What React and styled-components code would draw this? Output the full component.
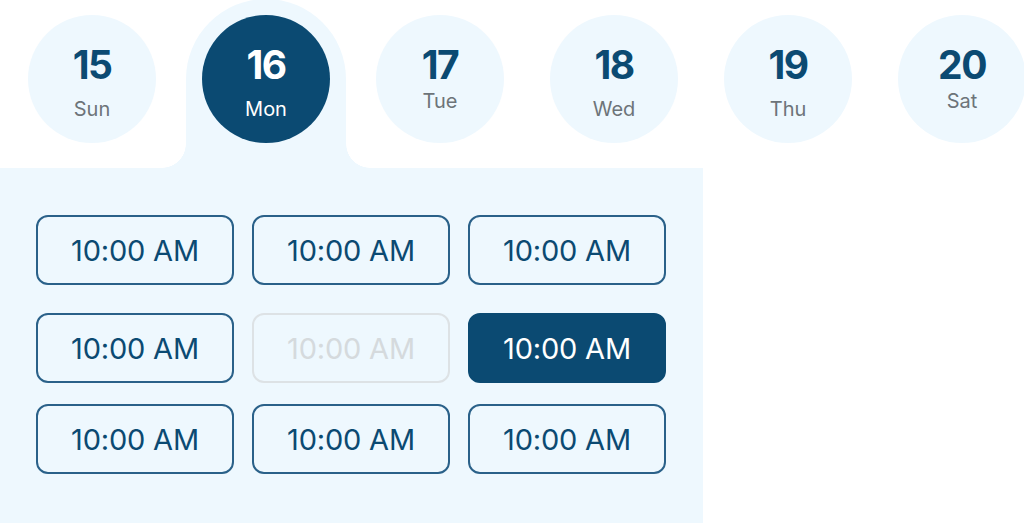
import styled, { createGlobalStyle, css } from "styled-components";

const GlobalStyle = createGlobalStyle`
  html, body {
    margin: 0;
    padding: 0;
    background: #ffffff;
    overflow: hidden;
  }

  body {
    font-family: Inter, "Noto Sans", sans-serif;
  }
`;

const LIGHT = "#eef8fe";
const DARK = "#0b4a72";

const Page = styled.main`
  width: 1024px;
  height: 523px;
  overflow: hidden;
  background: #ffffff;
`;

const DayRow = styled.ul`
  display: flex;
  gap: 46px;
  margin: 0;
  padding: 15px 0 0 28px;
  list-style: none;
  height: 128px;
`;

const DayItem = styled.li`
  position: relative;
  flex: 0 0 128px;
  height: 128px;

  ${(p) =>
    p.$active &&
    css`
      &::before {
        content: "";
        position: absolute;
        left: -16px;
        top: -16px;
        width: 160px;
        height: 170px;
        border-radius: 80px 80px 0 0;
        background: ${LIGHT};
      }

      &::after {
        content: "";
        position: absolute;
        left: -40px;
        top: 129px;
        width: 208px;
        height: 24px;
        background:
          radial-gradient(circle at 0 0, transparent 23.5px, ${LIGHT} 24px) left top / 24px 24px no-repeat,
          radial-gradient(circle at 100% 0, transparent 23.5px, ${LIGHT} 24px) right top / 24px 24px no-repeat;
      }
    `}
`;

const DayCircle = styled.button`
  position: relative;
  width: 128px;
  height: 128px;
  border: none;
  border-radius: 50%;
  padding: 0;
  display: flex;
  flex-direction: column;
  align-items: center;
  background: ${(p) => (p.$active ? DARK : LIGHT)};
  color: ${(p) => (p.$active ? "#ffffff" : DARK)};
  font-family: Inter, "Noto Sans", sans-serif;
  cursor: pointer;
`;

const DayNumber = styled.span`
  margin-top: 30px;
  font-size: 39px;
  line-height: 40px;
  font-weight: 700;
  letter-spacing: -1.5px;
`;

const DayName = styled.span`
  margin-top: ${(p) => (p.$raised ? "4px" : "12px")};
  font-size: 20px;
  line-height: 24px;
  font-weight: 400;
  color: ${(p) => (p.$active ? "#ffffff" : "#6d7479")};
`;

const Panel = styled.section`
  width: 703px;
  height: 355px;
  margin-top: 25px;
  background: ${LIGHT};
  padding: 47px 0 0 36px;
  box-sizing: border-box;
`;

const SlotGrid = styled.div`
  display: grid;
  grid-template-columns: repeat(3, 198px);
  grid-template-rows: 77px 70px 70px;
  align-items: start;
  column-gap: 18px;
  row-gap: 21px;
`;

const Slot = styled.button`
  box-sizing: border-box;
  height: 70px;
  border-radius: 12px;
  border: 2px solid #2a6189;
  background: transparent;
  color: ${DARK};
  font-family: Inter, "Noto Sans", sans-serif;
  font-size: 29px;
  font-weight: 400;
  letter-spacing: -0.2px;
  cursor: pointer;

  ${(p) =>
    p.$selected &&
    css`
      background: ${DARK};
      border-color: ${DARK};
      color: #ffffff;
    `}

  ${(p) =>
    p.disabled &&
    css`
      border-color: #dde2e5;
      color: #d5dadd;
      cursor: default;
    `}
`;

const days = [
  { num: 15, name: "Sun" },
  { num: 16, name: "Mon", active: true },
  { num: 17, name: "Tue", raised: true },
  { num: 18, name: "Wed" },
  { num: 19, name: "Thu" },
  { num: 20, name: "Sat", raised: true },
];

const slots = [
  {},
  {},
  {},
  {},
  { disabled: true },
  { selected: true },
  {},
  {},
  {},
];

export default function App() {
  return (
    <Page>
      <GlobalStyle />
      <DayRow>
        {days.map((day) => (
          <DayItem key={day.num} $active={day.active}>
            <DayCircle $active={day.active}>
              <DayNumber>{day.num}</DayNumber>
              <DayName $active={day.active} $raised={day.raised}>
                {day.name}
              </DayName>
            </DayCircle>
          </DayItem>
        ))}
      </DayRow>
      <Panel>
        <SlotGrid>
          {slots.map((slot, i) => (
            <Slot key={i} disabled={slot.disabled} $selected={slot.selected}>
              10:00 AM
            </Slot>
          ))}
        </SlotGrid>
      </Panel>
    </Page>
  );
}
